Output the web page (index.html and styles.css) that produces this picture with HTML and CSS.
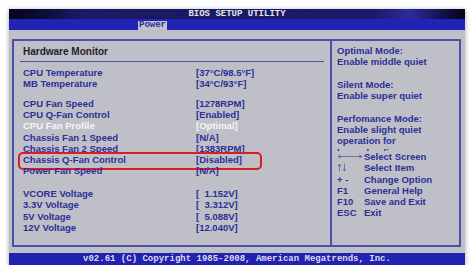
FILE: index.html
```html
<!DOCTYPE html>
<html>
<head lang="en">
    <meta charset="UTF-8">
    <title>BIOS Setup - Hardware Monitor</title>
    <link rel="stylesheet" href="styles.css">
</head>
<body>
    <div class="screen">
        <div class="title">BIOS SETUP UTILITY</div>
        <div class="tabs"><span class="tab">Power</span></div>
        <div class="main">
            <div class="panel">
                <div class="left">
                    <h1 class="heading">Hardware Monitor</h1>
                    <div class="rule"></div>
                    <div class="list">
                        <div class="group">
                            <div class="row"><span>CPU Temperature</span><span>[37°C/98.5°F]</span></div>
                            <div class="row"><span>MB Temperature</span><span>[34°C/93°F]</span></div>
                        </div>
                        <div class="group second">
                            <div class="row"><span>CPU Fan Speed</span><span>[1278RPM]</span></div>
                            <div class="row"><span>CPU Q-Fan Control</span><span>[Enabled]</span></div>
                            <div class="row active"><span>CPU Fan Profile</span><span>[Optimal]</span></div>
                            <div class="row"><span>Chassis Fan 1 Speed</span><span>[N/A]</span></div>
                            <div class="row"><span>Chassis Fan 2 Speed</span><span>[1383RPM]</span></div>
                            <div class="row marked"><span>Chassis Q-Fan Control</span><span>[Disabled]</span></div>
                            <div class="row"><span>Power Fan Speed</span><span>[N/A]</span></div>
                        </div>
                        <div class="group third">
                            <div class="row"><span>VCORE Voltage</span><span>[<i class="pad"></i>1.152V]</span></div>
                            <div class="row"><span>3.3V Voltage</span><span>[<i class="pad"></i>3.312V]</span></div>
                            <div class="row"><span>5V Voltage</span><span>[<i class="pad"></i>5.088V]</span></div>
                            <div class="row"><span>12V Voltage</span><span>[12.040V]</span></div>
                        </div>
                    </div>
                </div>
                <div class="right">
                    <div class="help">
                        <p>Optimal Mode:<br>Enable middle quiet</p>
                        <p>Silent Mode:<br>Enable super quiet</p>
                        <p>Perfomance Mode:<br>Enable slight quiet<br>operation for<br>heavy loading</p>
                    </div>
                    <div class="keys">
                        <div class="key">
                            <span>
                                <svg width="26" height="7" viewBox="0 0 26 7"><path d="M1 3.5H25M1 3.5L4 1.8M1 3.5L4 5.2M25 3.5L22 1.8M25 3.5L22 5.2" stroke="#5a5da3" stroke-width="0.8" fill="none"/></svg>
                            </span>
                            <span>Select Screen</span>
                        </div>
                        <div class="key">
                            <span>
                                <svg width="10" height="9" viewBox="0 0 10 9"><path d="M2.5 8.5V1M2.5 1L1 3.2M2.5 1L4 3.2M7.5 0.5V8M7.5 8L6 5.8M7.5 8L9 5.8" stroke="#5a5da3" stroke-width="0.8" fill="none"/></svg>
                            </span>
                            <span>Select Item</span>
                        </div>
                        <div class="key"><span>+ -</span><span>Change Option</span></div>
                        <div class="key"><span>F1</span><span>General Help</span></div>
                        <div class="key"><span>F10</span><span>Save and Exit</span></div>
                        <div class="key"><span>ESC</span><span>Exit</span></div>
                    </div>
                </div>
            </div>
        </div>
        <div class="footer">v02.61 (C) Copyright 1985-2008, American Megatrends, Inc.</div>
    </div>
</body>
</html>
```

FILE: styles.css
```css
*{
    margin: 0;
    padding: 0;
    box-sizing: border-box;
}
body{
    background: #fff;
    padding: 9px 0 0 9px;
}

.screen{
    width: 456px;
    height: 256px;
    display: flex;
    flex-direction: column;
    box-shadow: 0 1px 5px rgba(0,0,0,.35);
    font-family: "Liberation Sans", Arial, sans-serif;
}
.title{
    height: 10px;
    background: linear-gradient(90deg, #06061c 0%, #0c0c36 7%, #1a1a66 16%, #191962 50%, #1b1b6c 80%, #2c2c9c 88%, #12124c 95%, #05051a 100%);
    color: #e6e6f0;
    font: bold 9px/11px "Liberation Mono", monospace;
    text-align: center;
}
.tabs{
    height: 11px;
    background: #2222b4;
    display: flex;
    align-items: flex-end;
    padding-left: 129px;
}
.tab{
    height: 9px;
    padding: 0 1px;
    background: #c2c2cb;
    color: #2b2ba0;
    font: bold 9px/9px "Liberation Mono", monospace;
}
.main{
    flex: 1;
    display: flex;
    background: #bfbfc7;
    padding: 9px 4px 6px 3px;
}
.panel{
    flex: 1;
    display: flex;
    border: 2px solid #4e4eae;
}

.left{
    width: 318px;
    border-right: 2px solid #4e4eae;
    padding-top: 5px;
}
.heading{
    padding-left: 9px;
    font-size: 10px;
    line-height: 11.3px;
    font-weight: bold;
    color: #1d1d2c;
}
.rule{
    height: 1px;
    margin: 4px 6px 0;
    background: #4e4eae;
}
.list{
    padding: 4.4px 0 0 9px;
}
.second{
    margin-top: 8.4px;
}
.third{
    margin-top: 11.4px;
}
.row{
    position: relative;
    display: grid;
    grid-template-columns: 173px auto;
    font-size: 9.5px;
    line-height: 11.3px;
    font-weight: bold;
    color: #2b2f98;
}
.row .pad{
    display: inline-block;
    width: 5.3px;
}
.row.active{
    color: #f6f6f6;
}
.row.marked::after{
    content: "";
    position: absolute;
    left: -5px;
    top: -2px;
    width: 240px;
    height: 14px;
    border: 2px solid #d81e1e;
    border-radius: 5px;
}

.right{
    flex: 1;
    padding: 4px 0 0 5px;
}
.help{
    height: 106px;
    overflow: hidden;
    font-size: 9.5px;
    line-height: 11.3px;
    font-weight: bold;
    color: #2b2f98;
}
.help p{
    margin-bottom: 11.3px;
}
.key{
    display: grid;
    grid-template-columns: 27px auto;
    align-items: center;
    height: 11.3px;
    font-size: 9.5px;
    line-height: 11.3px;
    font-weight: bold;
    color: #2b2f98;
}
.key svg{
    display: block;
}

.footer{
    height: 12px;
    background: #2121b2;
    color: #dcdce8;
    font: bold 9px/12px "Liberation Mono", monospace;
    text-align: center;
}
```
